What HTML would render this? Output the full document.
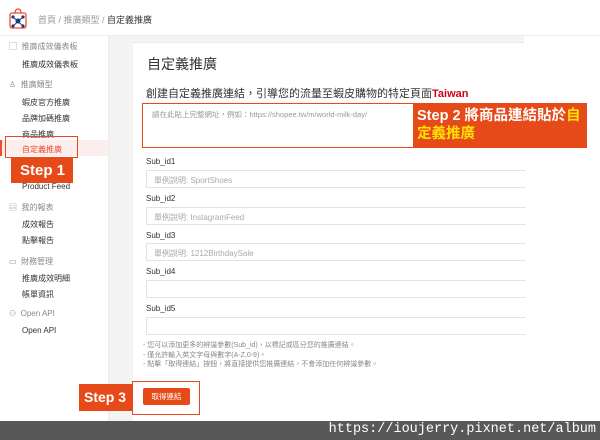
<!DOCTYPE html>
<html><head><meta charset="utf-8"><style>
*{margin:0;padding:0;box-sizing:border-box}
body{width:600px;height:440px;overflow:hidden;background:#fff;font-family:"Liberation Sans","Noto Sans CJK TC",sans-serif;position:relative;color:#333}
.a{position:absolute;white-space:nowrap}
.side{font-size:8px;color:#333}
.sh{font-size:8px;color:#888}
.lbl{font-size:8px;color:#333;left:146px}
.inp{position:absolute;left:146px;width:380px;height:18px;border:1px solid #e3e3e3;border-right:none;background:#fff;font-size:8px;color:#aaa;padding:4px 7px}
</style></head><body>
<div class="a" style="left:0;top:35px;width:600px;height:1px;background:#eee"></div>
<svg class="a" style="left:8px;top:8px" width="20" height="22" viewBox="0 0 20 22"><rect x="2" y="5" width="16" height="15" rx="2" fill="#fff" stroke="#ee4d2d" stroke-width="1.3"/><path d="M7 5 Q7 1 10 1 Q13 1 13 5" fill="none" stroke="#ee4d2d" stroke-width="1.3"/><circle cx="10" cy="13" r="2.5" fill="#1b3a7a"/><circle cx="5" cy="9" r="1.6" fill="#1b3a7a"/><circle cx="15" cy="9" r="1.6" fill="#1b3a7a"/><circle cx="5" cy="18" r="1.6" fill="#1b3a7a"/><circle cx="15" cy="18" r="1.6" fill="#1b3a7a"/><path d="M5 9L15 18M15 9L5 18" stroke="#1b3a7a" stroke-width="1"/></svg>
<div class="a" style="left:38px;top:13px;font-size:9px;color:#999">首頁 / 推廣類型 / <span style="color:#333">自定義推廣</span></div>
<div class="a" style="left:108px;top:36px;width:2px;height:385px;background:#eee"></div>
<div class="a" style="left:110px;top:36px;width:23px;height:385px;background:#f4f4f4"></div>
<div class="a" style="left:110px;top:36px;width:414px;height:6px;background:#f4f4f4"></div>
<div class="a" style="left:133px;top:42px;width:391px;height:1px;background:#eaeaea"></div>
<div class="a sh" style="left:9px;top:41px">▢ &nbsp;推廣成效儀表板</div>
<div class="a side" style="left:22px;top:59px">推廣成效儀表板</div>
<div class="a sh" style="left:9px;top:79px">♙ &nbsp;推廣類型</div>
<div class="a side" style="left:22px;top:97px">蝦皮官方推廣</div>
<div class="a side" style="left:22px;top:113px">品牌加碼推廣</div>
<div class="a side" style="left:22px;top:129px">商品推廣</div>
<div class="a" style="left:0;top:140px;width:108px;height:16px;background:#fdeeee"></div>
<div class="a" style="left:0;top:140px;width:2px;height:16px;background:#ee4d2d"></div>
<div class="a side" style="left:22px;top:144px;color:#ee4d2d">自定義推廣</div>
<div class="a" style="left:5px;top:136px;width:73px;height:22px;border:1.5px solid #e64a19"></div>
<div class="a" style="left:11px;top:158px;width:62px;height:25px;background:#e64a19;color:#fff;font-weight:bold;font-size:15px;padding:4px 0 0 9px">Step 1</div>
<div class="a side" style="left:22px;top:182px">Product Feed</div>
<div class="a sh" style="left:9px;top:202px">▤ &nbsp;我的報表</div>
<div class="a side" style="left:22px;top:219px">成效報告</div>
<div class="a side" style="left:22px;top:235px">點擊報告</div>
<div class="a sh" style="left:9px;top:256px">▭ &nbsp;財務管理</div>
<div class="a side" style="left:22px;top:273px">推廣成效明細</div>
<div class="a side" style="left:22px;top:289px">帳單資訊</div>
<div class="a sh" style="left:9px;top:309px">⚇ &nbsp;Open API</div>
<div class="a side" style="left:22px;top:326px">Open API</div>
<div class="a" style="left:147px;top:54px;font-size:14px;color:#333">自定義推廣</div>
<div class="a" style="left:146px;top:85px;font-size:11px;color:#333">創建自定義推廣連結，引導您的流量至蝦皮購物的特定頁面<b style="color:#d0021b">Taiwan</b></div>
<div class="a" style="left:142px;top:103px;width:272px;height:45px;border:1.5px solid #e64a19;background:#fff;font-size:7.5px;color:#999;padding:5px 9px">請在此貼上完整網址，例如：https://shopee.tw/m/world-milk-day/</div>
<div class="a" style="left:414px;top:103px;width:173px;height:45px;background:#e64a19;color:#fff;font-weight:bold;font-size:14.5px;line-height:18px;padding:4px 0 0 3px;white-space:normal">Step 2 將商品連結貼於<span style="color:#ffe000">自定義推廣</span></div>
<div class="a lbl" style="top:157px">Sub_id1</div>
<div class="inp" style="top:170px">單例說明: SportShoes</div>
<div class="a lbl" style="top:194px">Sub_id2</div>
<div class="inp" style="top:207px">單例說明: InstagramFeed</div>
<div class="a lbl" style="top:231px">Sub_id3</div>
<div class="inp" style="top:243px">單例說明: 1212BirthdaySale</div>
<div class="a lbl" style="top:267px">Sub_id4</div>
<div class="inp" style="top:280px"></div>
<div class="a lbl" style="top:304px">Sub_id5</div>
<div class="inp" style="top:317px"></div>
<div class="a" style="left:143px;top:341px;font-size:7px;line-height:9.5px;color:#888">- 您可以添加更多的辨識參數(Sub_id)，以標記或區分您的推廣連結。<br>- 僅允許輸入英文字母與數字(A-Z,0-9)。<br>- 點擊「取得連結」按鈕，將直接提供您推廣連結，不會添加任何辨識參數。</div>
<div class="a" style="left:79px;top:384px;width:54px;height:27px;background:#e64a19;color:#fff;font-weight:bold;font-size:14px;padding:5px 0 0 5px">Step 3</div>
<div class="a" style="left:132px;top:381px;width:68px;height:34px;border:1.5px solid #e64a19;background:#fff"></div>
<div class="a" style="left:143px;top:388px;width:47px;height:17px;background:#e64a19;border-radius:2px;color:#fff;font-size:7.5px;text-align:center;line-height:17px">取得連結</div>
<div class="a" style="left:0;top:421px;width:600px;height:19px;background:#585858"></div>
<div class="a" style="right:4px;top:422px;font-family:'Liberation Mono',monospace;font-size:13.5px;color:#fff">https://ioujerry.pixnet.net/album</div>
</body></html>
